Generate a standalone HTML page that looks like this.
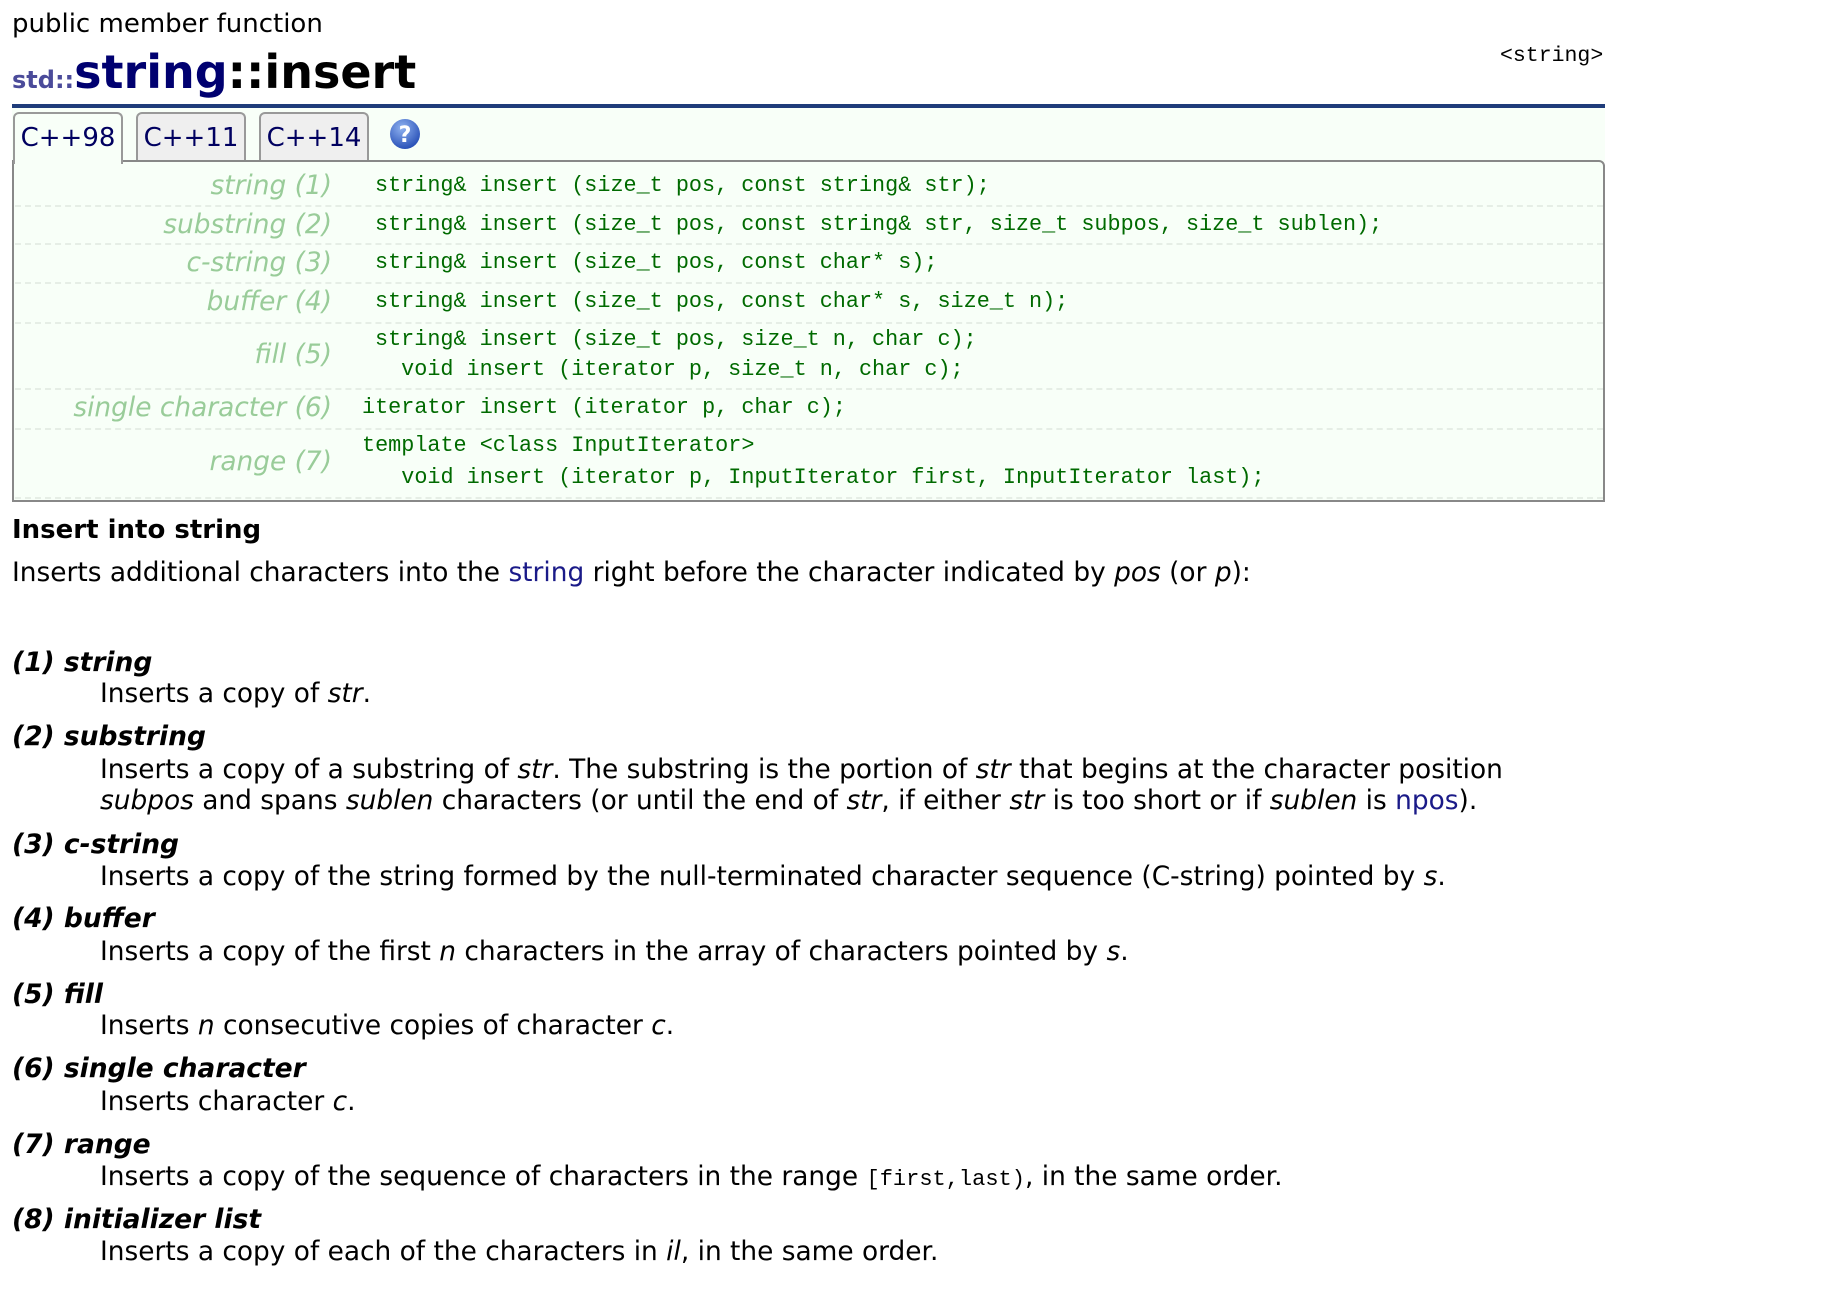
<!DOCTYPE html>
<html><head><meta charset="utf-8">
<style>
body{margin:0;width:1826px;height:1295px;background:#fff;position:relative;overflow:hidden;font-family:"DejaVu Sans","Liberation Sans",sans-serif;color:#000}
.a{position:absolute;white-space:pre;line-height:32px}
.code{font-family:"Liberation Mono","Noto Serif CJK SC",monospace;font-size:21.8px;color:#006a00}
.lbl{font-style:italic;color:#99cc99;font-size:26.4px;text-align:right;right:1494px}
.sep{position:absolute;left:15px;width:1588px;border-top:2px dashed #e6eee6;height:0}
.t{font-size:26.4px}
.h{font-size:26.5px;font-weight:bold;font-style:italic}
a{color:#1a1a88;text-decoration:none}
.tab{position:absolute;top:112px;height:50px;border:2px solid #999;border-bottom:none;border-radius:6px 6px 0 0;background:#efefef;font-size:26px;color:#000060;line-height:48px;text-align:center;box-sizing:border-box}
</style></head><body>
<div class="a" style="left:12px;top:8px;font-size:26px">public member function</div>
<div class="a" style="left:12px;top:44px;line-height:56px;font-weight:bold"><span style="font-size:24px;color:#4b4b9a">std::</span><span style="font-size:46px;color:#000070">string</span><span style="font-size:46px">::insert</span></div>
<div class="a" style="left:1500px;top:40px;font-family:'Liberation Mono','Noto Serif CJK SC',monospace;font-size:21.5px">&lt;string&gt;</div>
<div style="position:absolute;left:12px;top:104px;width:1593px;height:4px;background:#1f3c7a"></div>
<div style="position:absolute;left:12px;top:108px;width:1593px;height:54px;background:#f8fff8"></div>
<div class="tab" style="left:13px;width:110px;background:#f8fff8;height:52px;z-index:2">C++98</div>
<div class="tab" style="left:136px;width:110px">C++11</div>
<div class="tab" style="left:259px;width:110px">C++14</div>
<svg style="position:absolute;left:389px;top:118px" width="32" height="32"><defs><radialGradient id="g" cx="40%" cy="30%" r="70%"><stop offset="0" stop-color="#8fb2f0"/><stop offset="1" stop-color="#2a52b8"/></radialGradient></defs><circle cx="16" cy="16" r="15" fill="url(#g)"/><text x="16" y="24" text-anchor="middle" font-family="DejaVu Sans" font-weight="bold" font-size="22" fill="#fff">?</text></svg>
<div style="position:absolute;left:12px;top:160px;width:1593px;height:342px;box-sizing:border-box;border:2px solid #888;border-radius:0 6px 0 0;background:#f8fff8"></div>
<div class="sep" style="top:205px"></div>
<div class="sep" style="top:243px"></div>
<div class="sep" style="top:282px"></div>
<div class="sep" style="top:322px"></div>
<div class="sep" style="top:388px"></div>
<div class="sep" style="top:428px"></div>
<div class="sep" style="top:497px"></div>
<div class="a lbl" style="top:170px">string (1)</div>
<div class="a lbl" style="top:209px">substring (2)</div>
<div class="a lbl" style="top:247px">c-string (3)</div>
<div class="a lbl" style="top:286px">buffer (4)</div>
<div class="a lbl" style="top:339px">fill (5)</div>
<div class="a lbl" style="top:392px">single character (6)</div>
<div class="a lbl" style="top:446px">range (7)</div>
<div class="a code" style="left:375px;top:170px">string&amp; insert (size_t pos, const string&amp; str);</div>
<div class="a code" style="left:375px;top:209px">string&amp; insert (size_t pos, const string&amp; str, size_t subpos, size_t sublen);</div>
<div class="a code" style="left:375px;top:247px">string&amp; insert (size_t pos, const char* s);</div>
<div class="a code" style="left:375px;top:286px">string&amp; insert (size_t pos, const char* s, size_t n);</div>
<div class="a code" style="left:375px;top:324px">string&amp; insert (size_t pos, size_t n, char c);</div>
<div class="a code" style="left:375px;top:354px">  void insert (iterator p, size_t n, char c);</div>
<div class="a code" style="left:362px;top:392px">iterator insert (iterator p, char c);</div>
<div class="a code" style="left:362px;top:430px">template &lt;class InputIterator&gt;</div>
<div class="a code" style="left:362px;top:462px">   void insert (iterator p, InputIterator first, InputIterator last);</div>

<div class="a" style="left:12px;top:514px;font-size:26px;font-weight:bold">Insert into string</div>
<div class="a t" style="left:12px;top:557px">Inserts additional characters into the <a>string</a> right before the character indicated by <i>pos</i> (or <i>p</i>):</div>

<div class="a h" style="left:12px;top:647px">(1) string</div>
<div class="a t" style="left:100px;top:678px">Inserts a copy of <i>str</i>.</div>
<div class="a h" style="left:12px;top:721px">(2) substring</div>
<div class="a t" style="left:100px;top:754px">Inserts a copy of a substring of <i>str</i>. The substring is the portion of <i>str</i> that begins at the character position</div>
<div class="a t" style="left:100px;top:785px"><i>subpos</i> and spans <i>sublen</i> characters (or until the end of <i>str</i>, if either <i>str</i> is too short or if <i>sublen</i> is <a>npos</a>).</div>
<div class="a h" style="left:12px;top:829px">(3) c-string</div>
<div class="a t" style="left:100px;top:861px">Inserts a copy of the string formed by the null-terminated character sequence (C-string) pointed by <i>s</i>.</div>
<div class="a h" style="left:12px;top:903px">(4) buffer</div>
<div class="a t" style="left:100px;top:936px">Inserts a copy of the first <i>n</i> characters in the array of characters pointed by <i>s</i>.</div>
<div class="a h" style="left:12px;top:979px">(5) fill</div>
<div class="a t" style="left:100px;top:1010px">Inserts <i>n</i> consecutive copies of character <i>c</i>.</div>
<div class="a h" style="left:12px;top:1053px">(6) single character</div>
<div class="a t" style="left:100px;top:1086px">Inserts character <i>c</i>.</div>
<div class="a h" style="left:12px;top:1129px">(7) range</div>
<div class="a t" style="left:100px;top:1161px">Inserts a copy of the sequence of characters in the range <span style="font-family:'Liberation Mono','Noto Serif CJK SC',monospace;font-size:22px">[first,last)</span>, in the same order.</div>
<div class="a h" style="left:12px;top:1204px">(8) initializer list</div>
<div class="a t" style="left:100px;top:1236px">Inserts a copy of each of the characters in <i>il</i>, in the same order.</div>
</body></html>
